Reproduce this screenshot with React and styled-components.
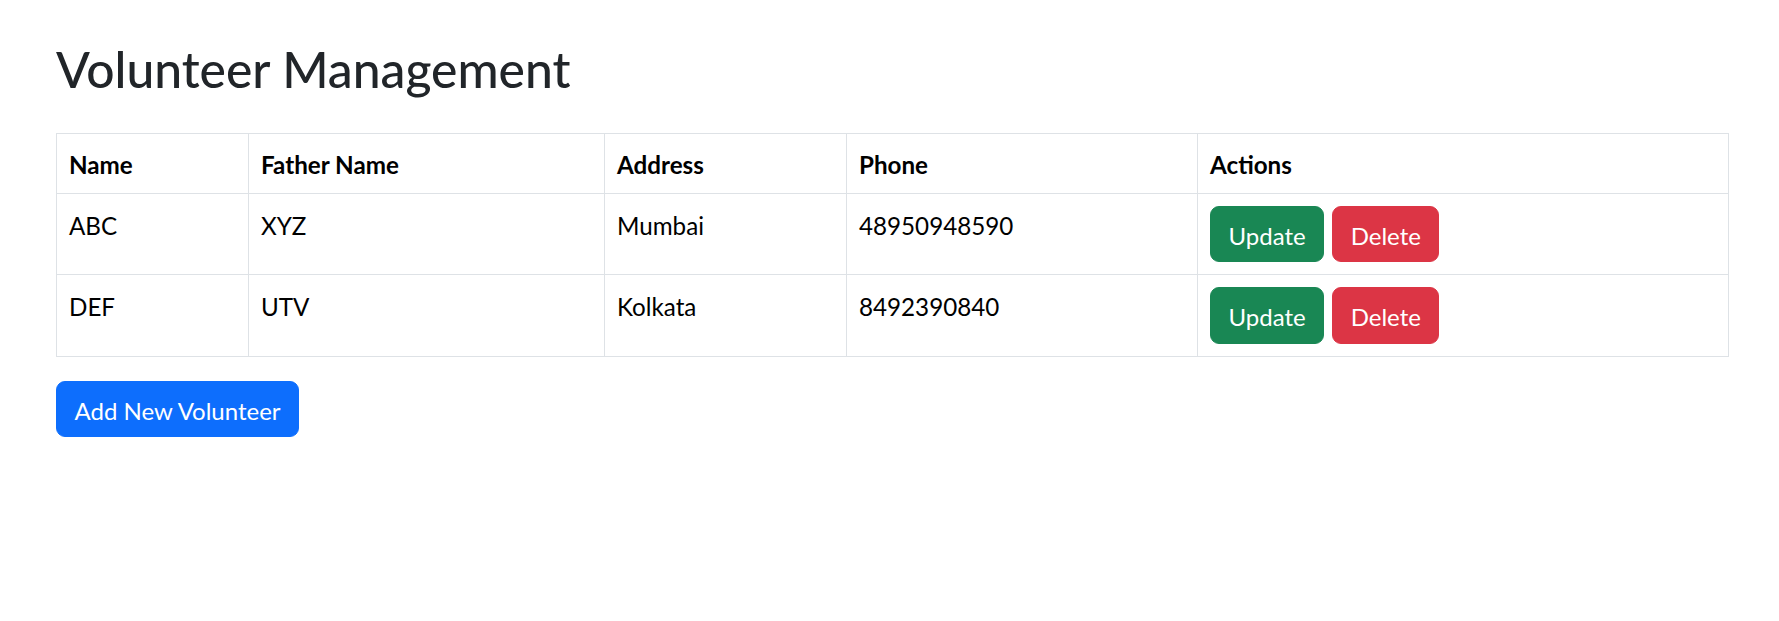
import React from "react";
import styled, { createGlobalStyle } from "styled-components";

const GlobalStyle = createGlobalStyle`
  html, body { margin: 0; padding: 0; background: #fff; }
  body {
    font-family: "Segoe UI", Lato, "Noto Sans", sans-serif;
    color: #212529;
    -webkit-font-smoothing: antialiased;
  }
  * { box-sizing: border-box; }
`;

const Page = styled.div`
  padding: 40px 50px 0 56px;
`;

const Title = styled.h2`
  margin: 0 0 34px;
  font-size: 49.8px;
  font-weight: 500;
  line-height: 58.8px;
  color: #212529;
`;

const Table = styled.table`
  width: 100%;
  table-layout: fixed;
  border-collapse: collapse;
  border: 1px solid #dee2e6;
  margin-bottom: 24px;
  color: #000;
`;

const paddings = {
  head: "13px 12px 11px",
  text: "14px 12px 10px",
  actions: "12px",
};

const Cell = styled.td`
  padding: ${(p) => paddings[p.$kind || "text"]};
  border: 1px solid #dee2e6;
  font-size: 24.2px;
  line-height: 35.25px;
  font-weight: ${(p) => (p.$kind === "head" ? 700 : 400)};
  text-align: left;
  vertical-align: top;
`;

const Actions = styled.div`
  display: flex;
  gap: 8px;
`;

const colors = {
  success: "#198754",
  danger: "#dc3545",
  primary: "#0d6efd",
};

const Button = styled.button`
  font-family: inherit;
  font-size: 24px;
  line-height: 35.25px;
  font-weight: 400;
  color: #fff;
  background: ${(p) => colors[p.$variant]};
  border: 1px solid ${(p) => colors[p.$variant]};
  border-radius: 9px;
  padding: 11px 17.5px 8px;
  cursor: pointer;
`;

const volunteers = [
  { name: "ABC", father: "XYZ", address: "Mumbai", phone: "48950948590" },
  { name: "DEF", father: "UTV", address: "Kolkata", phone: "8492390840" },
];

const widths = [192, 356, 242, 351];

export default function App() {
  return (
    <>
      <GlobalStyle />
      <Page>
        <Title>Volunteer Management</Title>
        <Table>
          <colgroup>
            {widths.map((w, i) => (
              <col key={i} style={{ width: w }} />
            ))}
            <col />
          </colgroup>
          <thead>
            <tr>
              {["Name", "Father Name", "Address", "Phone", "Actions"].map((h) => (
                <Cell as="th" $kind="head" key={h}>
                  {h}
                </Cell>
              ))}
            </tr>
          </thead>
          <tbody>
            {volunteers.map((v) => (
              <tr key={v.name}>
                <Cell>{v.name}</Cell>
                <Cell>{v.father}</Cell>
                <Cell>{v.address}</Cell>
                <Cell>{v.phone}</Cell>
                <Cell $kind="actions">
                  <Actions>
                    <Button $variant="success">Update</Button>
                    <Button $variant="danger">Delete</Button>
                  </Actions>
                </Cell>
              </tr>
            ))}
          </tbody>
        </Table>
        <Button $variant="primary">Add New Volunteer</Button>
      </Page>
    </>
  );
}
